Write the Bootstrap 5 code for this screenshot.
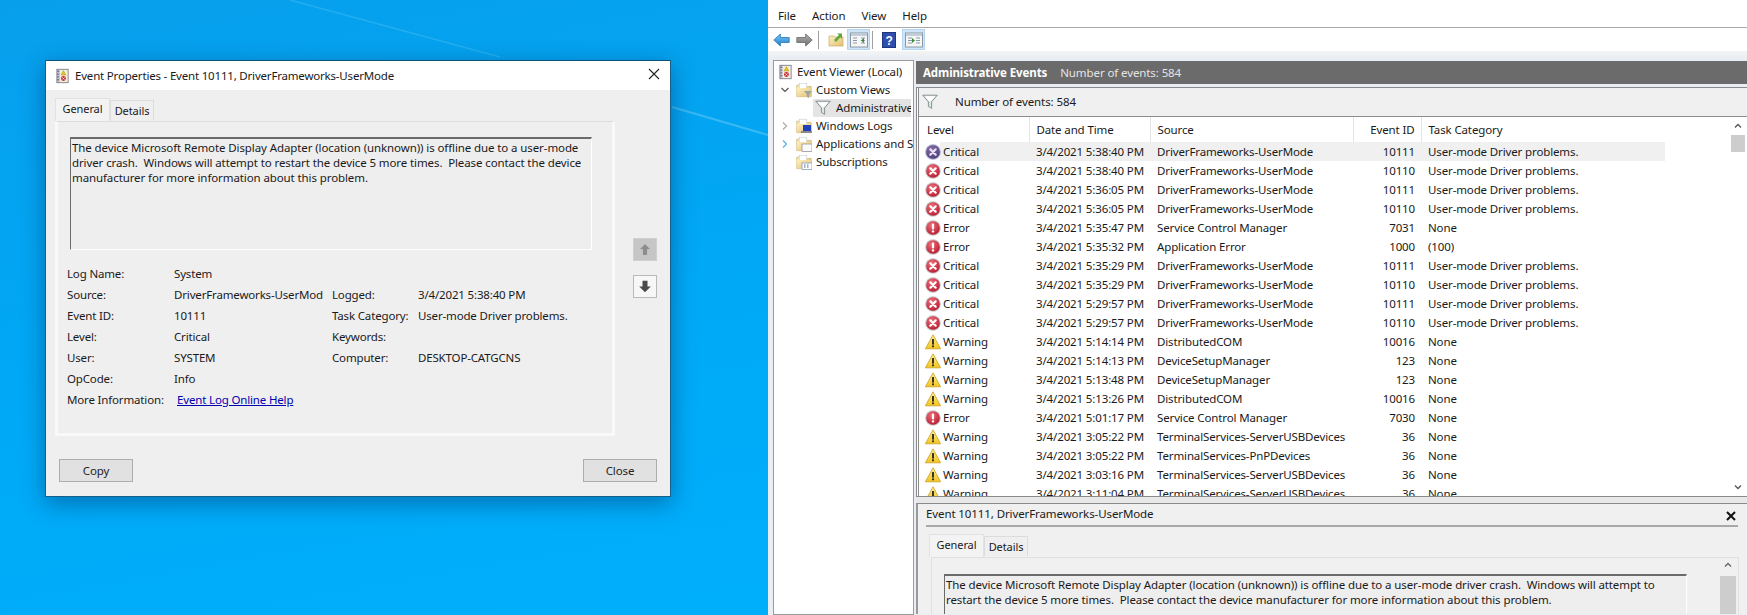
<!DOCTYPE html>
<html lang="en">
<head>
  <meta charset="UTF-8" />
  <title>Event Viewer</title>
  <link href="https://cdn.jsdelivr.net/npm/bootstrap@5.3.3/dist/css/bootstrap.min.css" rel="stylesheet" />
  <style>
    html, body { height: 100%; overflow: hidden; }
    body { font-family: "Noto Sans", "Liberation Sans", sans-serif; font-size: 11.5px; color: #1a1a1a; letter-spacing: -.1px; }
    .desk { position: relative; width: 1747px; height: 615px; overflow: hidden; background: linear-gradient(170deg, #079fec 0%, #00a9f6 45%, #00b2ff 100%); }
    .streaks { position: absolute; left: 0; top: 0; }

    /* dialog */
    .dlg { position: absolute; left: 45px; top: 60px; width: 626px; height: 437px; background: #f0eff0; border: 1px solid #14618a; border-top-color: #0c5378; box-shadow: 0 6px 22px rgba(0,40,90,.45); }
    .dlg-title { height: 29px; background: #fff; padding-left: 9px; gap: 5px; letter-spacing: -.19px; }
    .dlg-x { position: absolute; right: 9px; top: 6px; }
    .dlg-body { padding: 8px 9px 0; }
    .tabs-win { height: 23px; font-size: 11px; }
    .tab-win { width: 44px; text-align: center; background: #f0eff0; border: 1px solid #dcdcdc; border-bottom: 0; height: 20px; margin-top: 2px; line-height: 19px; }
    .tab-win.on { width: 55px; height: 23px; margin-top: 0; border-color: #e2e2e2; background: #f4f3f4; line-height: 20px; }
    .dlg-main { height: 316px; }
    .dlg-panel { width: 560px; height: 315px; border: 3px solid #f9f9f9; border-top: 1px solid #dcdcdc; padding: 15px 12px 0; }
    .msg-box { background: #efeeef; border: 1px solid #fff; border-top: 2px solid #6b6b6b; border-left: 1px solid #6b6b6b; padding: 1px 2px; line-height: 15px; }
    .dlg-msg { width: 522px; height: 113px; padding-left: 1px; }
    .fields { margin-top: 13px; letter-spacing: -.16px; }
    .fld-row { height: 21px; line-height: 21px; }
    .f-a { width: 107px; margin-left: -3px; }
    .f-b { width: 158px; white-space: nowrap; overflow: hidden; }
    .f-c { width: 86px; }
    .ev-link { color: #0000b0; margin-left: 3px; }
    .side-btns { margin-left: 18px; margin-top: 117px; gap: 14px; width: 24px; }
    .sq-btn { width: 24px; height: 23px; border: 1px solid #b9b9b9; padding: 3px; background: #f7f7f7; }
    .sq-btn.off { background: #c6c6c6; border-color: #cfcfcf; }
    .dlg-foot { padding: 22px 4px 0; }
    .win-btn { width: 74px; height: 23px; padding: 0; font-size: 11.5px; background: #e1e1e1; border: 1px solid #adadad; border-radius: 0; color: #222; letter-spacing: -.1px; }

    /* mmc window */
    .mmc { position: absolute; left: 768px; top: 0; width: 979px; height: 615px; background: #f0f0f0; }
    .menu-strip { flex: none; height: 28px; background: #fff; border-bottom: 1px solid #a9a9a9; padding: 4px 0 0 10px; gap: 16px; }
    .tool-strip { flex: none; height: 23px; background: #fff; padding-left: 5px; }
    .tool-hi { width: 23px; height: 21px; background: #cfe4f7; border: 1px solid #b4d4ef; }
    .tool-sep { width: 1px; height: 18px; background: #a0a0a0; }
    .sp-2 { margin-left: 2px; } .sp-3 { margin-left: 3px; } .sp-5 { margin-left: 5px; } .sp-6 { margin-left: 6px; } .sp-9 { margin-left: 9px; }
    .band { flex: none; height: 9px; background: linear-gradient(#f4f4f4, #e6ecf3); }
    .mmc-bottom { flex: none; height: 555px; background: #e9eef4; padding-left: 5px; gap: 2px; }
    .tree { width: 141px; height: 555px; background: #fff; border: 1px solid #9b9b9b; padding-top: 2px; overflow: hidden; }
    .tree svg { flex: none; }
    .tree-i { height: 18px; white-space: nowrap; }
    .tree-chev { width: 8px; margin-left: 7px; margin-right: 7px; }
    .tree-sel { background: #e4e4e4; margin-left: 39px; margin-right: 2px; padding-left: 2px; gap: 5px; overflow: hidden; }
    .center { width: 831px; height: 555px; overflow: hidden; }
    .center-head { height: 23px; background: #6b6b6b; color: #e4e4e4; padding-left: 7px; gap: 13px; margin-top: 1px; }
    .center-head b { color: #fff; font-weight: 700; }
    .events { height: 410px; margin-top: 3px; border: 1px solid #8a8a8a; border-left: 3px double #8a8a8a; border-right: 0; background: #fff; overflow: hidden; position: relative; }
    .filter-bar { height: 29px; background: #f0f0f0; border-bottom: 1px solid #8d8d8d; padding-left: 3px; gap: 17px; }
    table.ev-tbl { width: 745px; table-layout: fixed; border-collapse: collapse; margin: 0 0 0 1px; font-size: 11.5px; letter-spacing: -.13px; }
    .ev-tbl th, .ev-tbl td { padding: 0 0 0 7px; height: 19px; line-height: 19px; border: 0; background: transparent; font-weight: 400; white-space: nowrap; overflow: hidden; color: #1a1a1a; box-shadow: none; }
    .ev-tbl th { height: 25px; border-right: 1px solid #e5e5e5; vertical-align: middle; }
    .ev-tbl th:last-child { border-right: 0; }
    .ev-tbl td.lv { padding-left: 5px; }
    .ev-tbl td.lv svg { vertical-align: -4px; margin-right: 2px; }
    .ev-tbl .num { text-align: right; padding-right: 6px; }
    .ev-tbl tr.sel td { background: #f0f0f0; }
    .ev-tbl tr.sel td.lv { background: linear-gradient(90deg, transparent 20px, #f0f0f0 20px); }
    .scroll-v { position: absolute; right: 2px; top: 29px; bottom: 0; width: 14px; }
    .scroll-up { position: absolute; top: 6px; left: 3px; }
    .scroll-dn { position: absolute; bottom: 6px; left: 3px; }
    .scroll-th { position: absolute; top: 18px; left: 0; width: 14px; height: 17px; background: #cdcdcd; }
    .split { height: 6px; background: #e8e8e8; }
    .preview { height: 111px; background: #f0f0f0; border-top: 1px solid #8a8a8a; border-left: 2px solid #9a9a9a; overflow: hidden; padding: 0 0 0 8px; position: relative; }
    .pv-head { height: 23px; border-bottom: 2px solid #a8a8a8; margin-right: 9px; padding-top: 1px; }
    .pv-x { position: absolute; right: 11px; top: 7px; }
    .pv-tabs { margin-top: 7px; margin-left: 3px; }
    .pv-panel { height: 80px; margin-left: 5px; margin-right: 8px; border: 1px solid #e0e0e0; padding: 16px 0 0 12px; position: relative; }
    .pv-msg { width: 743px; height: 60px; padding-left: 1px; }
    .pv-scr { position: absolute; right: 2px; top: 0; width: 16px; }
    .pv-scr-th { width: 16px; height: 60px; background: #cdcdcd; margin-top: 8px; }
  </style>
</head>
<body>
  <svg width="0" height="0" class="d-block position-absolute">
    <defs>
      <radialGradient id="gr-red" cx=".4" cy=".3" r=".8"><stop offset="0" stop-color="#f0707a"/><stop offset="1" stop-color="#b3142a"/></radialGradient>
      <radialGradient id="gr-pur" cx=".4" cy=".3" r=".8"><stop offset="0" stop-color="#8a6ea8"/><stop offset="1" stop-color="#463a78"/></radialGradient>
      <linearGradient id="gr-yel" x1="0" y1="0" x2="0" y2="1"><stop offset="0" stop-color="#fff09a"/><stop offset="1" stop-color="#f4c41c"/></linearGradient>
      <linearGradient id="gr-fold" x1="0" y1="0" x2="1" y2="1"><stop offset="0" stop-color="#fdf0c0"/><stop offset="1" stop-color="#e3c073"/></linearGradient>
      <linearGradient id="gr-blue" x1="0" y1="0" x2="0" y2="1"><stop offset="0" stop-color="#7cc8f4"/><stop offset="1" stop-color="#1f7fc8"/></linearGradient>
      <linearGradient id="gr-gray" x1="0" y1="0" x2="0" y2="1"><stop offset="0" stop-color="#b4b4b4"/><stop offset="1" stop-color="#6e6e6e"/></linearGradient>

      <symbol id="i-crit" viewBox="0 0 16 16"><circle cx="8" cy="8" r="7.8" fill="#c4c4c4"/><circle cx="8" cy="8" r="6.8" fill="url(#gr-red)"/><path d="M5.3 5.3l5.4 5.4M10.700 5.3l-5.4 5.4" stroke="#fff" stroke-width="2.2" stroke-linecap="round"/></symbol>
      <symbol id="i-crit-sel" viewBox="0 0 16 16"><circle cx="8" cy="8" r="7.8" fill="#a9a9c8"/><circle cx="8" cy="8" r="6.8" fill="url(#gr-pur)"/><path d="M5.3 5.3l5.4 5.4M10.700 5.3l-5.4 5.4" stroke="#e8e4f4" stroke-width="2.2" stroke-linecap="round"/></symbol>
      <symbol id="i-err" viewBox="0 0 16 16"><circle cx="8" cy="8" r="7.8" fill="#c4c4c4"/><circle cx="8" cy="8" r="6.8" fill="url(#gr-red)"/><rect x="6.9" y="3.4" width="2.2" height="6" rx="1" fill="#fff"/><circle cx="8" cy="11.4" r="1.2" fill="#fff"/></symbol>
      <symbol id="i-warn" viewBox="0 0 16 16"><path d="M8 .8L15.6 14.8H.4z" fill="url(#gr-yel)" stroke="#c9a020" stroke-width=".8" stroke-linejoin="round"/><rect x="7.1" y="5" width="1.8" height="5.6" fill="#222"/><rect x="7.1" y="11.4" width="1.8" height="1.8" fill="#222"/></symbol>

      <symbol id="i-book" viewBox="0 0 16 16"><rect x="2" y=".8" width="12" height="14.4" fill="#c8c4d4" stroke="#6a6a80" stroke-width=".8"/><rect x="5" y="1.500" width="8.3" height="13" fill="#f4f0d4"/><path d="M2.500 3h2M2.500 6h2M2.500 9h2M2.500 12h2" stroke="#54547a"/><path d="M9 2.200L11.600 7H6.400z" fill="#e8c528" stroke="#9a7a10" stroke-width=".4"/><circle cx="9" cy="10.600" r="2.600" fill="#c42a3a"/><path d="M7.800 9.400l2.400 2.400M10.200 9.400l-2.400 2.400" stroke="#fff" stroke-width=".8"/></symbol>
      <symbol id="i-folder" viewBox="0 0 16 16"><path d="M.8 3.200h5l1.200 1.400h8.200v10H.8z" fill="url(#gr-fold)" stroke="#c8ab66" stroke-width=".7"/><rect x="3.200" y="1.200" width="7.600" height="6" fill="#fff" stroke="#c8c8c8" stroke-width=".6"/><path d="M.8 6h14.400v8.600H.8z" fill="url(#gr-fold)"/></symbol>
      <symbol id="i-funnel" viewBox="0 0 16 16"><path d="M.7 1.200h14.600L9.600 7.800v6.600L6.400 12.400V7.800z" fill="#dfe4e4" stroke="#7c8a8a" stroke-width=".9" stroke-linejoin="round"/><path d="M2.600 2.200h10.800l-4.600 5H7.200z" fill="#fff"/></symbol>
      <symbol id="i-back" viewBox="0 0 17 14"><path d="M7.400 1L.8 7l6.600 6V9.500h8.800v-5H7.400z" fill="url(#gr-blue)" stroke="#2379be" stroke-width=".8" stroke-linejoin="round"/></symbol>
      <symbol id="i-fwd" viewBox="0 0 17 14"><path d="M9.600 1l6.600 6-6.600 6V9.500H.8v-5h8.800z" fill="url(#gr-gray)" stroke="#666" stroke-width=".8" stroke-linejoin="round"/></symbol>
      <symbol id="i-pane" viewBox="0 0 18 16"><rect x=".5" y="1" width="17" height="14" fill="#f6f6f6" stroke="#8a98a4"/><rect x="1" y="1.500" width="16" height="2.400" fill="#c0ccd8"/><path d="M3 6h4M3 8.500h4M3 11h4M11 6h4M11 8.500h4M11 11h4" stroke="#8a98a4"/></symbol>
      <symbol id="i-arrow-up" viewBox="0 0 18 18"><path d="M9 2l7 7h-4v7H6V9H2z" fill="#8d8d8d" stroke="#d8d8d8" stroke-width=".6"/></symbol>
      <symbol id="i-arrow-dn" viewBox="0 0 18 18"><path d="M9 16l7-7h-4V2H6v7H2z" fill="#4a4a4a"/></symbol>
    </defs>
  </svg>

  <div class="desk">
    <svg class="streaks" width="768" height="615" viewBox="0 0 768 615">
      <path d="M290 0L500 57" stroke="#5cc6f4" stroke-width="1.500" fill="none" opacity=".35"/>
      <path d="M672 107L768 135" stroke="#8ad6f8" stroke-width="2" fill="none" opacity=".4"/>
    </svg>

    <!-- event properties dialog -->
    <div class="dlg">
      <div class="dlg-title d-flex align-items-center">
        <svg width="15" height="16"><use href="#i-book"/></svg>
        <span>Event Properties - Event 10111, DriverFrameworks-UserMode</span>
      </div>
      <svg class="dlg-x" width="14" height="14" viewBox="0 0 14 14"><path d="M2 2l10 10M12 2L2 12" stroke="#222" stroke-width="1.100"/></svg>
      <div class="dlg-body">
        <div class="tabs-win d-flex">
          <div class="tab-win on">General</div>
          <div class="tab-win">Details</div>
        </div>
        <div class="dlg-main d-flex">
          <div class="dlg-panel">
            <div class="msg-box dlg-msg">The device Microsoft Remote Display Adapter (location (unknown)) is offline due to a user-mode driver crash.&nbsp; Windows will attempt to restart the device 5 more times.&nbsp; Please contact the device manufacturer for more information about this problem.</div>
            <div class="fields">
              <div class="fld-row d-flex"><div class="f-a">Log Name:</div><div class="f-b">System</div></div>
              <div class="fld-row d-flex"><div class="f-a">Source:</div><div class="f-b">DriverFrameworks-UserMod</div><div class="f-c">Logged:</div><div>3/4/2021 5:38:40 PM</div></div>
              <div class="fld-row d-flex"><div class="f-a">Event ID:</div><div class="f-b">10111</div><div class="f-c">Task Category:</div><div>User-mode Driver problems.</div></div>
              <div class="fld-row d-flex"><div class="f-a">Level:</div><div class="f-b">Critical</div><div class="f-c">Keywords:</div></div>
              <div class="fld-row d-flex"><div class="f-a">User:</div><div class="f-b">SYSTEM</div><div class="f-c">Computer:</div><div>DESKTOP-CATGCNS</div></div>
              <div class="fld-row d-flex"><div class="f-a">OpCode:</div><div class="f-b">Info</div></div>
              <div class="fld-row d-flex"><div class="f-a">More Information:</div><div class="f-b"><a class="ev-link" href="#">Event Log Online Help</a></div></div>
            </div>
          </div>
          <div class="side-btns d-flex flex-column">
            <div class="sq-btn off"><svg class="d-block" width="16" height="15"><use href="#i-arrow-up"/></svg></div>
            <div class="sq-btn"><svg class="d-block" width="16" height="15"><use href="#i-arrow-dn"/></svg></div>
          </div>
        </div>
        <div class="dlg-foot d-flex justify-content-between">
          <button type="button" class="btn win-btn">Copy</button>
          <button type="button" class="btn win-btn">Close</button>
        </div>
      </div>
    </div>

    <!-- event viewer window -->
    <div class="mmc d-flex flex-column">
      <div class="menu-strip d-flex align-items-center"><span>File</span><span>Action</span><span>View</span><span>Help</span></div>
      <div class="tool-strip d-flex align-items-center">
        <svg width="17" height="14"><use href="#i-back"/></svg>
        <svg class="sp-6" width="17" height="14"><use href="#i-fwd"/></svg>
        <div class="tool-sep sp-5"></div>
        <svg class="sp-9" width="16" height="15" viewBox="0 0 16 15"><path d="M1 4h5l1 1h8v9H1z" fill="url(#gr-fold)" stroke="#c8ab66" stroke-width=".7"/><path d="M6 8L11 3 9 1.500h5V7l-1.600-1.800L8 10z" fill="#5ea83a"/></svg>
        <div class="tool-hi sp-3 d-flex align-items-center justify-content-center"><svg width="18" height="16"><use href="#i-pane"/><path d="M14 6v5l-3-2.500z" fill="#3a8a3a"/></svg></div>
        <div class="tool-sep sp-2"></div>
        <svg class="sp-9" width="14" height="16" viewBox="0 0 14 16"><rect x=".5" y=".5" width="13" height="15" fill="#2f4fae" stroke="#20357c"/><text x="7" y="12.500" text-anchor="middle" font-family="Liberation Sans" font-size="12" font-weight="700" fill="#fff">?</text></svg>
        <div class="tool-hi sp-6 d-flex align-items-center justify-content-center"><svg width="18" height="16"><use href="#i-pane"/><path d="M7 6v5l3-2.500z" fill="#3a8a3a"/></svg></div>
      </div>
      <div class="band"></div>
      <div class="mmc-bottom d-flex">
        <div class="tree">
          <div class="tree-i d-flex align-items-center"><svg class="ms-1 me-1" width="15" height="16"><use href="#i-book"/></svg><span>Event Viewer (Local)</span></div>
          <div class="tree-i d-flex align-items-center">
            <svg class="tree-chev" width="8" height="8" viewBox="0 0 8 8"><path d="M.5 2l3.500 3.500L7.500 2" stroke="#555" stroke-width="1.200" fill="none"/></svg>
            <svg width="16" height="16"><use href="#i-folder"/><path d="M8 9h8L13 12.500V16l-2-1v-2.500z" fill="#9aa6a6"/></svg><span class="ms-1">Custom Views</span></div>
          <div class="tree-i tree-sel d-flex align-items-center"><svg width="16" height="16"><use href="#i-funnel"/></svg><span>Administrative</span></div>
          <div class="tree-i d-flex align-items-center">
            <svg class="tree-chev" width="8" height="8" viewBox="0 0 8 8"><path d="M2 .5l3.500 3.500L2 7.500" stroke="#aaa" stroke-width="1.200" fill="none"/></svg>
            <svg width="16" height="16"><use href="#i-folder"/><rect x="7" y="7" width="8" height="6" fill="#1f3fbf"/><rect x="5" y="13" width="11" height="2" fill="#8a8a8a"/></svg><span class="ms-1">Windows Logs</span></div>
          <div class="tree-i d-flex align-items-center">
            <svg class="tree-chev" width="8" height="8" viewBox="0 0 8 8"><path d="M2 .5l3.500 3.500L2 7.500" stroke="#55b4e4" stroke-width="1.200" fill="none"/></svg>
            <svg width="16" height="16"><use href="#i-folder"/><rect x="6" y="8" width="10" height="7.500" fill="#fafafa" stroke="#8a8a8a" stroke-width=".7"/></svg><span class="ms-1">Applications and S</span></div>
          <div class="tree-i d-flex align-items-center">
            <svg class="tree-chev invisible" width="8" height="8"></svg>
            <svg width="16" height="16"><use href="#i-folder"/><rect x="6" y="9" width="10" height="6.500" fill="#fff" stroke="#7a90b4" stroke-width=".7"/><path d="M8 11h1.500M11 11h1.500M8 13h1.500M11 13h1.500" stroke="#4a6aa4"/></svg><span class="ms-1">Subscriptions</span></div>
        </div>
        <div class="center">
          <div class="center-head d-flex align-items-center"><b>Administrative Events</b><span>Number of events: 584</span></div>
          <div class="events">
            <div class="filter-bar d-flex align-items-center">
              <svg width="16" height="16"><use href="#i-funnel"/></svg><span>Number of events: 584</span>
            </div>
            <table class="table ev-tbl">
              <colgroup><col style="width:109px"><col style="width:121px"><col style="width:203px"><col style="width:68px"><col></colgroup>
              <thead><tr><th>Level</th><th>Date and Time</th><th>Source</th><th class="num">Event ID</th><th>Task Category</th></tr></thead>
              <tbody>
                <tr class="sel"><td class="lv"><svg width="16" height="16"><use href="#i-crit-sel"/></svg>Critical</td><td>3/4/2021 5:38:40 PM</td><td>DriverFrameworks-UserMode</td><td class="num">10111</td><td>User-mode Driver problems.</td></tr>
                <tr><td class="lv"><svg width="16" height="16"><use href="#i-crit"/></svg>Critical</td><td>3/4/2021 5:38:40 PM</td><td>DriverFrameworks-UserMode</td><td class="num">10110</td><td>User-mode Driver problems.</td></tr>
                <tr><td class="lv"><svg width="16" height="16"><use href="#i-crit"/></svg>Critical</td><td>3/4/2021 5:36:05 PM</td><td>DriverFrameworks-UserMode</td><td class="num">10111</td><td>User-mode Driver problems.</td></tr>
                <tr><td class="lv"><svg width="16" height="16"><use href="#i-crit"/></svg>Critical</td><td>3/4/2021 5:36:05 PM</td><td>DriverFrameworks-UserMode</td><td class="num">10110</td><td>User-mode Driver problems.</td></tr>
                <tr><td class="lv"><svg width="16" height="16"><use href="#i-err"/></svg>Error</td><td>3/4/2021 5:35:47 PM</td><td>Service Control Manager</td><td class="num">7031</td><td>None</td></tr>
                <tr><td class="lv"><svg width="16" height="16"><use href="#i-err"/></svg>Error</td><td>3/4/2021 5:35:32 PM</td><td>Application Error</td><td class="num">1000</td><td>(100)</td></tr>
                <tr><td class="lv"><svg width="16" height="16"><use href="#i-crit"/></svg>Critical</td><td>3/4/2021 5:35:29 PM</td><td>DriverFrameworks-UserMode</td><td class="num">10111</td><td>User-mode Driver problems.</td></tr>
                <tr><td class="lv"><svg width="16" height="16"><use href="#i-crit"/></svg>Critical</td><td>3/4/2021 5:35:29 PM</td><td>DriverFrameworks-UserMode</td><td class="num">10110</td><td>User-mode Driver problems.</td></tr>
                <tr><td class="lv"><svg width="16" height="16"><use href="#i-crit"/></svg>Critical</td><td>3/4/2021 5:29:57 PM</td><td>DriverFrameworks-UserMode</td><td class="num">10111</td><td>User-mode Driver problems.</td></tr>
                <tr><td class="lv"><svg width="16" height="16"><use href="#i-crit"/></svg>Critical</td><td>3/4/2021 5:29:57 PM</td><td>DriverFrameworks-UserMode</td><td class="num">10110</td><td>User-mode Driver problems.</td></tr>
                <tr><td class="lv"><svg width="16" height="16"><use href="#i-warn"/></svg>Warning</td><td>3/4/2021 5:14:14 PM</td><td>DistributedCOM</td><td class="num">10016</td><td>None</td></tr>
                <tr><td class="lv"><svg width="16" height="16"><use href="#i-warn"/></svg>Warning</td><td>3/4/2021 5:14:13 PM</td><td>DeviceSetupManager</td><td class="num">123</td><td>None</td></tr>
                <tr><td class="lv"><svg width="16" height="16"><use href="#i-warn"/></svg>Warning</td><td>3/4/2021 5:13:48 PM</td><td>DeviceSetupManager</td><td class="num">123</td><td>None</td></tr>
                <tr><td class="lv"><svg width="16" height="16"><use href="#i-warn"/></svg>Warning</td><td>3/4/2021 5:13:26 PM</td><td>DistributedCOM</td><td class="num">10016</td><td>None</td></tr>
                <tr><td class="lv"><svg width="16" height="16"><use href="#i-err"/></svg>Error</td><td>3/4/2021 5:01:17 PM</td><td>Service Control Manager</td><td class="num">7030</td><td>None</td></tr>
                <tr><td class="lv"><svg width="16" height="16"><use href="#i-warn"/></svg>Warning</td><td>3/4/2021 3:05:22 PM</td><td>TerminalServices-ServerUSBDevices</td><td class="num">36</td><td>None</td></tr>
                <tr><td class="lv"><svg width="16" height="16"><use href="#i-warn"/></svg>Warning</td><td>3/4/2021 3:05:22 PM</td><td>TerminalServices-PnPDevices</td><td class="num">36</td><td>None</td></tr>
                <tr><td class="lv"><svg width="16" height="16"><use href="#i-warn"/></svg>Warning</td><td>3/4/2021 3:03:16 PM</td><td>TerminalServices-ServerUSBDevices</td><td class="num">36</td><td>None</td></tr>
                <tr><td class="lv"><svg width="16" height="16"><use href="#i-warn"/></svg>Warning</td><td>3/4/2021 3:11:04 PM</td><td>TerminalServices-ServerUSBDevices</td><td class="num">36</td><td>None</td></tr>
              </tbody>
            </table>
            <div class="scroll-v">
              <svg class="scroll-up" width="8" height="6" viewBox="0 0 8 6"><path d="M1 4.500L4 1.500l3 3" stroke="#555" stroke-width="1.300" fill="none"/></svg>
              <div class="scroll-th"></div>
              <svg class="scroll-dn" width="8" height="6" viewBox="0 0 8 6"><path d="M1 1.500L4 4.500l3-3" stroke="#555" stroke-width="1.300" fill="none"/></svg>
            </div>
          </div>
          <div class="split"></div>
          <div class="preview">
            <div class="pv-head">Event 10111, DriverFrameworks-UserMode</div>
            <svg class="pv-x" width="10" height="10" viewBox="0 0 10 10"><path d="M1 1l8 8M9 1l-8 8" stroke="#111" stroke-width="2"/></svg>
            <div class="pv-tabs tabs-win d-flex">
              <div class="tab-win on">General</div>
              <div class="tab-win">Details</div>
            </div>
            <div class="pv-panel">
              <div class="msg-box pv-msg">The device Microsoft Remote Display Adapter (location (unknown)) is offline due to a user-mode driver crash.&nbsp; Windows will attempt to restart the device 5 more times.&nbsp; Please contact the device manufacturer for more information about this problem.</div>
              <div class="pv-scr">
                <svg class="d-block mx-auto mt-1" width="8" height="6" viewBox="0 0 8 6"><path d="M1 4.500L4 1.500l3 3" stroke="#666" stroke-width="1.300" fill="none"/></svg>
                <div class="pv-scr-th"></div>
              </div>
            </div>
          </div>
        </div>
      </div>
    </div>
  </div>

  <script src="https://cdn.jsdelivr.net/npm/bootstrap@5.3.3/dist/js/bootstrap.bundle.min.js"></script>
</body>
</html>
